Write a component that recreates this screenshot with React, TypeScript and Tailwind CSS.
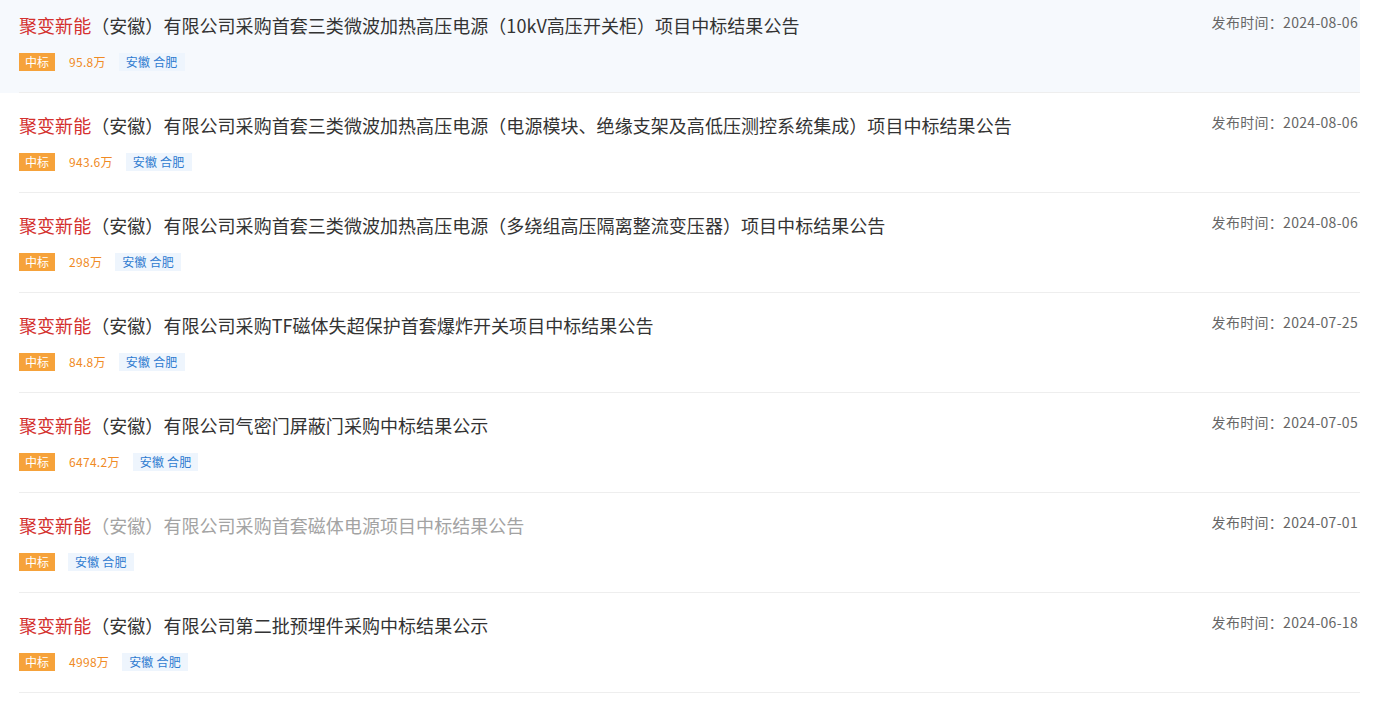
import React from "react";

type Item = { rest: string; date: string; amount?: string; visited?: boolean };

const items: Item[] = [
  { rest: "（安徽）有限公司采购首套三类微波加热高压电源（10kV高压开关柜）项目中标结果公告", date: "2024-08-06", amount: "95.8万" },
  { rest: "（安徽）有限公司采购首套三类微波加热高压电源（电源模块、绝缘支架及高低压测控系统集成）项目中标结果公告", date: "2024-08-06", amount: "943.6万" },
  { rest: "（安徽）有限公司采购首套三类微波加热高压电源（多绕组高压隔离整流变压器）项目中标结果公告", date: "2024-08-06", amount: "298万" },
  { rest: "（安徽）有限公司采购TF磁体失超保护首套爆炸开关项目中标结果公告", date: "2024-07-25", amount: "84.8万" },
  { rest: "（安徽）有限公司气密门屏蔽门采购中标结果公示", date: "2024-07-05", amount: "6474.2万" },
  { rest: "（安徽）有限公司采购首套磁体电源项目中标结果公告", date: "2024-07-01", visited: true },
  { rest: "（安徽）有限公司第二批预埋件采购中标结果公示", date: "2024-06-18", amount: "4998万" },
];

export default function App() {
  return (
    <div
      className="w-[1376px] h-[704px] overflow-hidden bg-white"
      style={{ fontFamily: '"Microsoft YaHei", "Noto Sans CJK SC", "Noto Sans", sans-serif' }}
    >
      <div className="w-[1360px]">
        {items.map((it, i) => (
          <div key={i} className={`${i === 0 ? "bg-[#f6f9fd]" : "bg-white"} mb-[7px]`}>
            <div className="ml-[19px] border-b border-[#eeeeee] pt-[12px] pb-[21px] flex justify-between">
              <div className="flex flex-col">
                <div className={`text-[18px] leading-[26px] tracking-[0.05px] ${it.visited ? "text-[#a3a3a3]" : "text-[#333333]"}`}>
                  <span className="text-[#d4302e]">聚变新能</span>
                  {it.rest}
                </div>
                <div className="flex items-center mt-[15px] h-[18px] text-[12px] leading-[18px]">
                  <span className="bg-[#f6a23a] text-white px-[6px] h-[18px] flex items-center">中标</span>
                  {it.amount && (
                    <span className="text-[#f08a24] ml-[14px] tracking-[0.3px]">{it.amount}</span>
                  )}
                  <span className="bg-[#eef5fd] text-[#2e7bd0] px-[7px] h-[18px] flex items-center ml-[13px] tracking-[0.2px]">安徽 合肥</span>
                </div>
              </div>
              <div className="text-[14px] leading-[20px] text-[#666666] pr-[2px] whitespace-nowrap tracking-[0.3px]">
                发布时间：{it.date}
              </div>
            </div>
          </div>
        ))}
      </div>
    </div>
  );
}
